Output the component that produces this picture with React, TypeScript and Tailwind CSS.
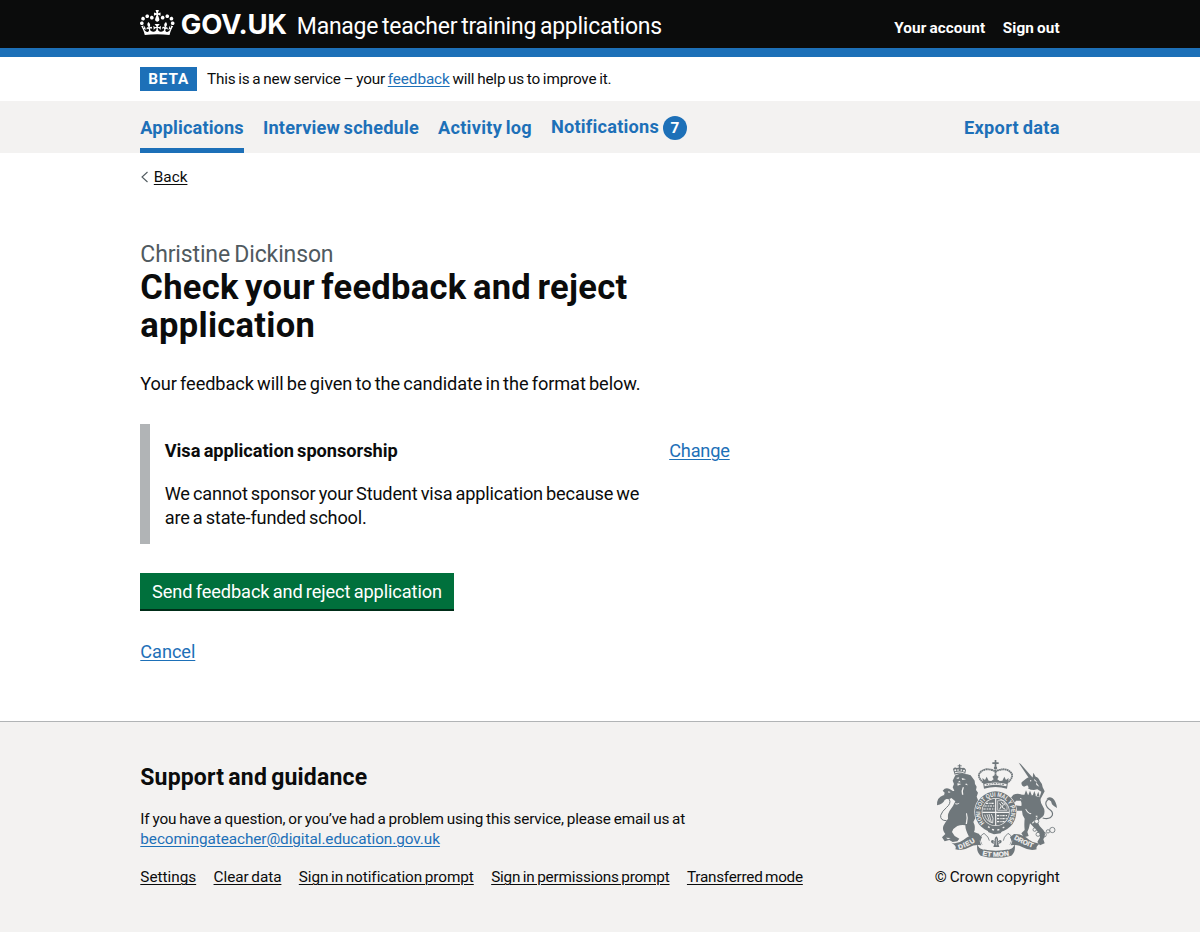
import React from "react";

function Crown() {
  return (
    <svg viewBox="0 0 132 97" className="h-[25.4px] w-[34.5px] shrink-0 fill-white" aria-hidden="true">
      <path d="M25 30.2c3.5 1.5 7.7-.2 9.1-3.7 1.5-3.6-.2-7.8-3.9-9.2-3.6-1.4-7.6.3-9.1 3.9-1.4 3.5.3 7.5 3.9 9zM9 39.5c3.6 1.5 7.8-.2 9.2-3.7 1.5-3.6-.2-7.8-3.9-9.1-3.6-1.5-7.6.2-9.1 3.8-1.4 3.5.3 7.5 3.8 9zM4.4 57.2c3.5 1.5 7.7-.2 9.1-3.8 1.5-3.6-.2-7.7-3.9-9.1-3.5-1.5-7.6.3-9.1 3.8-1.4 3.5.3 7.6 3.9 9.1zm38.3-21.4c3.5 1.5 7.7-.2 9.1-3.8 1.5-3.6-.2-7.7-3.9-9.1-3.6-1.5-7.6.3-9.1 3.8-1.3 3.6.4 7.7 3.9 9.1zm64.4-5.6c-3.6 1.5-7.8-.2-9.1-3.7-1.5-3.6.2-7.8 3.8-9.2 3.6-1.4 7.7.3 9.2 3.9 1.3 3.5-.4 7.5-3.9 9zm15.9 9.3c-3.6 1.5-7.7-.2-9.1-3.7-1.5-3.6.2-7.8 3.7-9.1 3.6-1.5 7.7.2 9.2 3.8 1.5 3.5-.3 7.5-3.8 9zm4.7 17.7c-3.6 1.5-7.8-.2-9.2-3.8-1.5-3.6.2-7.7 3.9-9.1 3.6-1.5 7.7.3 9.2 3.8 1.3 3.5-.4 7.6-3.9 9.1zM89.3 35.8c-3.6 1.5-7.8-.2-9.2-3.8-1.4-3.6.2-7.7 3.9-9.1 3.6-1.5 7.7.3 9.2 3.8 1.4 3.6-.3 7.7-3.9 9.1zM69.7 17.7l8.9 4.7V9.3l-8.9 2.8c-.2-.3-.5-.6-.9-.9L72.4 0H59.6l3.5 11.2c-.3.3-.6.5-.9.9l-8.8-2.8v13.1l8.8-4.7c.3.3.6.7.9.9l-5 15.4v.1c-.2.8-.4 1.6-.4 2.4 0 4.1 3.1 7.5 7 8.1h.2c.3 0 .7.1 1 .1.4 0 .7 0 1-.1h.2c4-.6 7.1-4.1 7.1-8.1 0-.8-.1-1.7-.4-2.4V34l-5.1-15.4c.4-.2.7-.6 1-.9zM66 92.8c16.9 0 32.8 1.1 47.1 3.2 4-16.9 8.9-26.7 14-33.5l-9.6-3.4c1 4.9 1.1 7.2 0 10.2-1.5-1.4-3-4.3-4.2-8.7L108.6 76c2.8-2 5-3.2 7.5-3.3-4.4 9.4-10 11.9-13.6 11.2-4.3-.8-6.3-4.6-5.6-7.9 1-4.7 5.7-5.9 8-.5 4.3-8.7-3-11.4-7.6-8.8 7.1-7.2 7.9-13.5 2.1-21.1-8 6.1-8.1 12.3-4.5 20.8-4.7-5.4-12.1-2.5-9.5 6.2 3.4-5.2 7.9-2 7.2 3.1-.6 4.3-6.4 7.8-13.5 7.2-10.3-.9-10.9-8-11.2-13.8 2.5-.5 7.1 1.8 11 7.3L80.2 60c-4.1 4.4-8 5.3-12.3 5.4 1.4-4.4 8-11.6 8-11.6H55.5s6.4 7.2 7.9 11.6c-4.2-.1-8-1-12.3-5.4l1.4 16.4c3.9-5.5 8.5-7.7 10.9-7.3-.3 5.8-.9 12.8-11.1 13.8-7.2.6-12.9-2.9-13.5-7.2-.7-5 3.8-8.3 7.1-3.1 2.7-8.7-4.6-11.6-9.4-6.2 3.7-8.5 3.6-14.7-4.6-20.8-5.8 7.6-5 13.9 2.2 21.1-4.7-2.6-11.9.1-7.7 8.8 2.3-5.5 7.1-4.2 8.1.5.7 3.3-1.3 7.1-5.7 7.9-3.5.7-9-1.8-13.5-11.2 2.5.1 4.7 1.3 7.5 3.3l-4.7-15.4c-1.2 4.4-2.7 7.2-4.3 8.7-1.1-3-.9-5.3 0-10.2l-9.5 3.4c5 6.9 9.9 16.7 14 33.5 14.8-2.1 30.8-3.2 47.7-3.2z" />
    </svg>
  );
}

const INK = "#6f777b";
const PAPER = "#f3f2f1";

function RoyalArms() {
  return (
    <svg viewBox="48 27 366 300" className="h-[100px] w-[122px]" aria-hidden="true" fill={INK} stroke="none">
      {/* lion's crown */}
      <path d="M104 74 L99 57 Q104 50 111 54 L118 52 L126 54 Q134 51 138 60 L135 74 Q119 68 104 74Z" />
      <rect x="117" y="43" width="3.5" height="12" />
      <rect x="113" y="46" width="12" height="3" />
      <g fill={PAPER}>
        <circle cx="106" cy="61" r="3" /><circle cx="114" cy="60" r="2.6" /><circle cx="124" cy="60" r="2.6" /><circle cx="132" cy="62" r="3" />
        <path d="M105 70 Q119 65 134 71 L134 68 Q119 62 105 67Z" />
      </g>
      {/* lion */}
      <path d="M106 76 Q124 69 142 73 L152 76 L158 84 L164 92 L165 102 L170 110 L168 120 L174 128 L170 140 L174 150 L180 158 L174 166 L172 180 L182 204 L186 222 L176 216 L166 204 L160 216 Q168 232 162 246 L178 252 L172 264 L146 258 Q136 240 136 226 Q124 224 112 228 Q100 234 96 246 L104 258 L118 266 L112 274 L98 276 L88 270 L74 274 L66 262 L76 252 Q66 240 70 228 Q76 216 84 206 Q82 190 92 178 Q100 168 106 154 L94 144 L84 148 L78 144 L82 138 L72 136 L74 128 L68 122 L74 116 Q84 112 94 120 Q98 124 103 122 L98 112 L102 102 L98 92Z" />
      <g fill={PAPER}>
        <path d="M108 84 L118 82 L115 87Z M125 84 L138 88 L127 90Z M112 100 L124 102 L113 107Z M118 92 L122 97 L114 97Z M138 100 L144 106 L136 104Z" />
        <path d="M84 124 L92 126 L86 129Z M78 263 L92 264 L84 268Z M106 160 Q112 162 118 158 L117 161 Q111 165 105 162Z M138 190 Q142 205 137 222 L141 222 Q146 205 141 190Z M128 112 Q122 124 126 134 L130 134 Q127 122 132 112Z" />
      </g>
      <path d="M80 212 Q60 212 62 196 Q66 184 80 172 Q94 160 88 148 Q82 138 70 146" fill="none" stroke={INK} strokeWidth="3" />
      <path d="M51 166 Q50 142 70 136 Q86 132 92 146 Q80 144 74 150 Q70 162 51 166Z" />
      {/* unicorn */}
      <path d="M296 38 L302 42 L337 82 L329 88Z" />
      <path d="M338 82 L340 68 L347 80 Q356 82 360 94 Q368 102 368 112 L374 124 L362 146 Q360 156 368 168 Q378 182 370 198 Q360 206 352 214 Q356 228 370 240 Q380 252 370 268 L374 280 L360 286 L352 276 L360 262 Q358 248 346 238 Q338 228 330 220 Q328 234 322 246 L326 258 L312 262 L304 250 L314 240 Q312 222 314 206 Q306 196 306 182 L290 182 L280 174 L286 166 L304 168 Q306 158 302 152 L288 152 L282 162 L274 156 L272 144 L280 134 Q296 128 310 136 Q318 124 326 112 L322 106 L312 110 Q302 106 305 97 L318 86 Q326 79 338 82Z" />
      <path d="M322 114 L332 119 L342 120 L352 118 L364 125 L358 144 L342 138 L326 138 L308 134Z" fill={PAPER} />
      <path d="M318 121 l6 14 h-11Z M330 122 l5 13 h-10Z M343 123 l5 14 h-10Z M355 125 l4 15 l-9 -3Z M306 134 Q334 132 360 142 L359 146 Q334 136 306 138Z" />
      <g fill={PAPER}>
        <circle cx="332" cy="92" r="2.2" />
        <path d="M342 86 L352 96 L344 93Z M348 96 L358 110 L349 105Z M300 144 L308 148 L300 147Z M336 218 Q346 212 351 200 L353 202 Q347 216 338 221Z M318 176 Q324 188 334 190 L333 193 Q322 191 316 178Z" />
      </g>
      <path d="M368 204 Q390 210 397 196 Q400 186 388 178 Q373 166 379 154 Q386 144 396 150" fill="none" stroke={INK} strokeWidth="3.500" />
      <path d="M379 148 Q386 138 398 145 Q409 155 411 174 Q402 170 396 163 L393 154 Q386 148 379 148Z" />
      <g fill={PAPER} stroke={INK} strokeWidth="2.5">
        <circle cx="350" cy="214" r="6.500" /><circle cx="344" cy="239" r="5" /><circle cx="350" cy="199" r="3.500" />
        <circle cx="354" cy="253" r="6" /><circle cx="372" cy="254" r="7" fill="none" /><circle cx="397" cy="240" r="8" /><circle cx="384" cy="244" r="5" />
      </g>
      {/* imperial crown */}
      <path d="M224 30h5v7h7v5h-7v8h-5v-8h-7v-5h7Z" />
      <circle cx="226.500" cy="54" r="5" />
      <path d="M190 98 Q168 78 182 66 Q196 52 222 62 Q226 66 231 62 Q257 52 271 66 Q285 78 263 98" fill="none" stroke={INK} strokeWidth="5.500" strokeDasharray="5 1" />
      <path d="M226.500 60 V92" stroke={INK} strokeWidth="5.500" strokeDasharray="5 1" />
      <path d="M187 84 L195 90 L200 80 L206 92 L214 93 L221 88 L217 80 L223 76 H230 L236 80 L232 88 L239 93 L247 92 L253 80 L258 90 L266 84 L261 116 Q226 106 192 116Z" />
      <path d="M193 102 Q226 93 260 102 L259 109 Q226 99 194 109Z" fill={PAPER} />
      <path d="M199 104.500 Q226 97 254 104.500" fill="none" stroke={INK} strokeWidth="3" strokeDasharray="5 3" />
      {/* garter and shield */}
      <circle cx="227" cy="186" r="64" fill={PAPER} />
      <circle cx="227" cy="186" r="62" />
      <circle cx="227" cy="186" r="42" fill={PAPER} />
      <circle cx="227" cy="186" r="40" />
      <path id="garter" d="M194 218.500 A46.300 46.300 0 1 1 260 218.500" fill="none" />
      <text fill={PAPER} fontSize="19" className="font-['Liberation_Sans'] font-bold [word-spacing:0px]">
        <textPath href="#garter" textLength="214" lengthAdjust="spacingAndGlyphs">HONI SOIT QUI MAL Y PENSE</textPath>
      </text>
      <g stroke={PAPER} fill="none">
        <path d="M227 146 V226 M187 187 H267" strokeWidth="3.500" />
        <path d="M198 160 H223 M193 168 H223 M190 177 H223 M231 197 H263 M231 206 H260 M231 215 H254" strokeWidth="3.500" strokeDasharray="7 3 4 2" />
        <path d="M233 152 H250 L261 166 V181 H233Z" strokeWidth="2" />
        <path d="M239 178 L244 168 L239 160 M244 156 L250 164 L246 172 L256 178 M251 158 L256 166" strokeWidth="3" />
        <path d="M194 194 Q196 212 218 219 Q222 204 214 192 M201 193 L209 215 M207 192 L214 217" strokeWidth="2.500" />
      </g>
      <path d="M206 238 L220 240 L236 242 L250 236 L242 250 L222 253 L204 246Z" />
      <path d="M204 230 l5 3 M216 238 l6 2 M232 240 l6 -1 M248 234 l5 -3" stroke={PAPER} strokeWidth="4" />
      {/* thistle and rose beneath the shield */}
      <path d="M229 259 Q237 267 233 275 Q240 266 245 273 Q245 281 235 281 L238 291 H220 L223 281 Q213 281 213 273 Q218 266 225 275 Q221 267 229 259Z" />
      <path d="M229 266 v20 M219 275 l5 4 M239 275 l-5 4" stroke={PAPER} strokeWidth="2" />
      <path d="M186 284 Q172 260 192 250 Q208 262 208 272 M270 284 Q284 260 264 250 Q250 262 250 272" fill="none" stroke={INK} strokeWidth="2.500" />
      {/* motto ribbons */}
      <path d="M94 278 Q112 284 130 270 Q150 252 176 252 L186 262 L180 274 L184 286 Q164 282 148 292 Q128 304 106 298 Q112 288 94 278Z" />
      <path d="M364 278 Q346 284 328 270 Q308 252 282 252 L270 262 L276 274 L272 286 Q292 282 308 292 Q330 304 350 298 Q346 288 364 278Z" />
      <path d="M172 282 Q176 296 188 298 Q228 306 268 298 Q280 296 284 282 Q288 306 274 317 Q228 330 182 317 Q168 306 172 282Z" />
      <path d="M180 272 L190 300 M276 272 L266 300" stroke={PAPER} strokeWidth="2" />
      <g fill={PAPER} stroke={PAPER} strokeWidth="0.6" fontSize="20" className="font-['Liberation_Sans'] font-bold">
        <path id="dieu" d="M117 298 Q146 290 174 269" fill="none" stroke="none" />
        <path id="droit" d="M281 267 Q310 284 344 296" fill="none" stroke="none" />
        <path id="etmon" d="M187 316 Q228 325 270 315" fill="none" stroke="none" />
        <text><textPath href="#dieu" textLength="54">DIEU</textPath></text>
        <text><textPath href="#droit" textLength="62" lengthAdjust="spacingAndGlyphs">DROIT</textPath></text>
        <text><textPath href="#etmon" textLength="81" lengthAdjust="spacingAndGlyphs">ET MON</textPath></text>
      </g>
    </svg>
  );
}

const link = "underline decoration-1 underline-offset-2";

export default function App() {
  return (
    <div className="flex h-[932px] w-[1200px] flex-col overflow-hidden whitespace-nowrap bg-white font-['Roboto',sans-serif] text-[15.3px] text-[#0b0c0c] [word-spacing:-0.8px]">
      <header className="flex h-[57.300px] shrink-0 flex-col bg-[#0b0c0c] text-white">
        <div className="flex h-12 shrink-0 items-start px-[140.300px]">
          <div className="flex pt-[10.400px]"><Crown /></div>
          <span className="ml-[6px] mt-[7.500px] w-[116px] font-['Inter'] text-[27.5px] font-bold leading-8 tracking-[-0.3px]">GOV.UK</span>
          <span className="mt-[11px] text-[23px] leading-8 tracking-[-0.247px] [word-spacing:-1.6px]">Manage teacher training applications</span>
          <nav className="ml-auto mt-[16px] flex gap-[17.500px] font-bold leading-6 tracking-[0.1px]">
            <a href="#">Your account</a>
            <a href="#">Sign out</a>
          </nav>
        </div>
        <div className="flex-1 bg-[#1d70b8]" />
      </header>

      <div className="flex h-[43.400px] shrink-0 items-center px-[140.300px]">
        <strong className="flex h-6 w-[56.700px] items-center justify-center bg-[#1d70b8] pt-px text-[15.3px] tracking-[0.8px] text-white">BETA</strong>
        <span className="ml-[10px] pt-px tracking-[-0.186px]">
          This is a new service – your <a href="#" className={link + " tracking-[-0.1px] text-[#1d70b8]"}>feedback</a> will help us to improve it.
        </span>
      </div>

      <nav className="flex h-[52.300px] shrink-0 gap-[19px] bg-[#f3f2f1] px-[140.300px] text-[18.2px] font-bold leading-[53px] text-[#1d70b8] [word-spacing:-1.2px]">
        <a href="#" className="h-[52.300px] w-[103.700px] border-b-[5px] border-[#1d70b8] tracking-[0.125px]">Applications</a>
        <a href="#" className="w-[156px] tracking-[0.18px]">Interview schedule</a>
        <a href="#" className="w-[94px] tracking-[0.26px]">Activity log</a>
        <a href="#" className="flex items-center tracking-[0.2px]">
          <span className="w-[112px]">Notifications</span>
          <span className="mt-[2px] flex size-6 items-center justify-center rounded-full bg-[#1d70b8] text-[15.3px] leading-6 text-white">7</span>
        </a>
        <a href="#" className="ml-auto tracking-[0.3px]">Export data</a>
      </nav>

      <main className="flex flex-1 flex-col items-start px-[140.300px] pt-3">
        <a href="#" className="flex h-6 items-center">
          <svg viewBox="0 0 8 12" className="mr-[4.500px] h-3 w-[9px] fill-none stroke-[#505a5f]" aria-hidden="true">
            <path d="M7 1 L1.500 6 L7 11" strokeWidth="1.100" />
          </svg>
          <span className={link}>Back</span>
        </a>

        <h1 className="mt-[51px] text-[34.5px] font-bold leading-[37.700px] tracking-[0.3px] [word-spacing:-2.5px]">
          <span className="block text-[23px] font-normal leading-[29px] tracking-[-0.14px] [word-spacing:-1.2px] text-[#505a5f]">Christine Dickinson</span>
          Check your feedback and reject<br />application
        </h1>

        <p className="mt-[27px] pt-[0.500px] text-[18.2px] leading-6 tracking-[-0.09px] [word-spacing:-1.2px]">
          Your feedback will be given to the candidate in the format below.
        </p>

        <section className="mt-7 flex h-[120px] w-full border-l-[10px] border-[#b1b4b6] pl-[14.400px] pt-[15px] text-[18.2px] leading-6 [word-spacing:-1.2px]">
          <div className="w-[504.500px]">
            <h2 className="font-bold tracking-[-0.027px]">Visa application sponsorship</h2>
            <p className="mt-[19px] tracking-[-0.18px]">
              We cannot sponsor your Student visa application because we<br />are a state-funded school.
            </p>
          </div>
          <a href="#" className={link + " self-start tracking-[-0.19px] text-[#1d70b8]"}>Change</a>
        </section>

        <button className="mt-[29px] h-[38px] w-[313.500px] border-b-2 border-[#002d18] bg-[#00703c] pt-px text-[18.2px] leading-[35px] tracking-[-0.087px] text-white [word-spacing:-1.2px]">
          Send feedback and reject application
        </button>
        <a href="#" className={link + " mt-[29px] text-[18.2px] leading-6 tracking-[-0.06px] text-[#1d70b8]"}>Cancel</a>
      </main>

      <footer className="flex h-[211px] shrink-0 justify-between border-t border-[#b1b4b6] bg-[#f3f2f1] px-[140.300px]">
        <div className="pt-[42px]">
          <h2 className="text-[23px] font-bold leading-7 tracking-[0.16px] [word-spacing:-1.6px]">Support and guidance</h2>
          <p className="mt-[18.400px] leading-[19.200px] tracking-[-0.13px]">
            If you have a question, or you’ve had a problem using this service, please email us at<br />
            <a href="#" className={link + " tracking-[-0.06px] text-[#1d70b8]"}>becomingateacher@digital.education.gov.uk</a>
          </p>
          <div className="mt-[16.600px] flex gap-[17.400px] leading-6 [word-spacing:-1.1px]">
            <a href="#" className={link}>Settings</a>
            <a href="#" className={link + " tracking-[-0.04px]"}>Clear data</a>
            <a href="#" className={link + " tracking-[-0.06px]"}>Sign in notification prompt</a>
            <a href="#" className={link + " tracking-[-0.18px]"}>Sign in permissions prompt</a>
            <a href="#" className={link + " tracking-[-0.25px]"}>Transferred mode</a>
          </div>
        </div>
        <div className="flex flex-col items-end pt-[37px]">
          <div className="mr-[1.500px]"><RoyalArms /></div>
          <span className="mt-[6px] leading-6">© Crown copyright</span>
        </div>
      </footer>
    </div>
  );
}
